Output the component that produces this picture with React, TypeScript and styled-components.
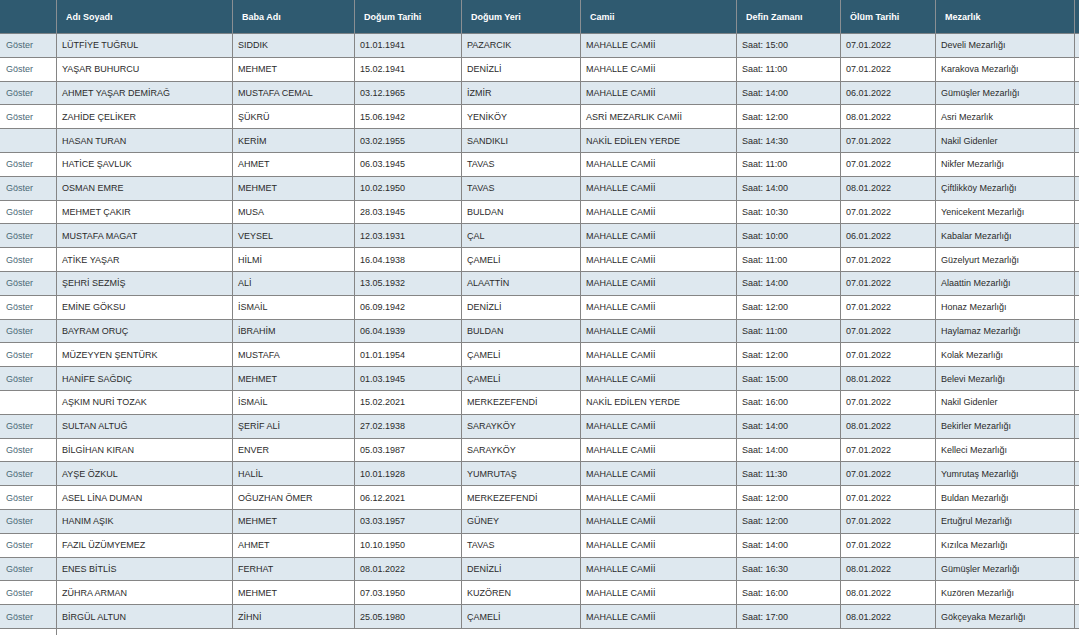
import React from "react";
import styled, { createGlobalStyle } from "styled-components";

const GlobalStyle = createGlobalStyle`
  html, body { margin: 0; padding: 0; background: #ffffff; overflow: hidden; }
  body { font-family: "Liberation Sans", Arial, sans-serif; }
`;

const Frame = styled.div`
  width: 100vw;
  height: 100vh;
  overflow: hidden;
`;

const Table = styled.table`
  border-collapse: separate;
  border-spacing: 0;
  table-layout: fixed;
  width: 1135px;
  font-family: "Liberation Sans", Arial, sans-serif;
  font-size: 9px;
  color: #2b2b2b;
`;

const HeadCell = styled.th`
  box-sizing: border-box;
  height: 34px;
  padding: 0 0 0 9px;
  background: #2f5a70;
  color: #ffffff;
  font-weight: bold;
  font-size: 9px;
  text-align: left;
  vertical-align: middle;
  border-right: 1px solid #8a8f93;
  border-bottom: 1px solid #7d8387;
  white-space: nowrap;
  overflow: hidden;
`;

const Row = styled.tr<{ $striped: boolean }>`
  height: 23.8px;
  background: ${(p) => (p.$striped ? "#dee8ef" : "#ffffff")};
`;

const Cell = styled.td`
  box-sizing: border-box;
  padding: 0 0 0 5px;
  vertical-align: middle;
  border-right: 1px solid #858585;
  border-bottom: 1px solid #858585;
  white-space: nowrap;
  overflow: hidden;
`;

const ShowCell = styled(Cell)`
  padding-left: 6px;
  color: #4a6876;
`;

const FootRow = styled.tr`
  height: 20px;
  background: #ffffff;
`;

const FootCell = styled.td<{ $divider?: boolean }>`
  border-right: ${(p) => (p.$divider ? "1px solid #858585" : "none")};
`;

const widths = [57, 176, 122, 107, 119, 156, 104, 95, 139, 60];
const headers = ["", "Adı Soyadı", "Baba Adı", "Doğum Tarihi", "Doğum Yeri", "Camii", "Defin Zamanı", "Ölüm Tarihi", "Mezarlık", ""];

type R = [boolean, string, string, string, string, string, string, string, string];

const rows: R[] = [
  [true, "LÜTFİYE TUĞRUL", "SIDDIK", "01.01.1941", "PAZARCIK", "MAHALLE CAMİİ", "Saat: 15:00", "07.01.2022", "Develi Mezarlığı"],
  [true, "YAŞAR BUHURCU", "MEHMET", "15.02.1941", "DENİZLİ", "MAHALLE CAMİİ", "Saat: 11:00", "07.01.2022", "Karakova Mezarlığı"],
  [true, "AHMET YAŞAR DEMİRAĞ", "MUSTAFA CEMAL", "03.12.1965", "İZMİR", "MAHALLE CAMİİ", "Saat: 14:00", "06.01.2022", "Gümüşler Mezarlığı"],
  [true, "ZAHİDE ÇELİKER", "ŞÜKRÜ", "15.06.1942", "YENİKÖY", "ASRİ MEZARLIK CAMİİ", "Saat: 12:00", "08.01.2022", "Asri Mezarlık"],
  [false, "HASAN TURAN", "KERİM", "03.02.1955", "SANDIKLI", "NAKİL EDİLEN YERDE", "Saat: 14:30", "07.01.2022", "Nakil Gidenler"],
  [true, "HATİCE ŞAVLUK", "AHMET", "06.03.1945", "TAVAS", "MAHALLE CAMİİ", "Saat: 11:00", "07.01.2022", "Nikfer Mezarlığı"],
  [true, "OSMAN EMRE", "MEHMET", "10.02.1950", "TAVAS", "MAHALLE CAMİİ", "Saat: 14:00", "08.01.2022", "Çiftlikköy Mezarlığı"],
  [true, "MEHMET ÇAKIR", "MUSA", "28.03.1945", "BULDAN", "MAHALLE CAMİİ", "Saat: 10:30", "07.01.2022", "Yenicekent Mezarlığı"],
  [true, "MUSTAFA MAGAT", "VEYSEL", "12.03.1931", "ÇAL", "MAHALLE CAMİİ", "Saat: 10:00", "06.01.2022", "Kabalar Mezarlığı"],
  [true, "ATİKE YAŞAR", "HİLMİ", "16.04.1938", "ÇAMELİ", "MAHALLE CAMİİ", "Saat: 11:00", "07.01.2022", "Güzelyurt Mezarlığı"],
  [true, "ŞEHRİ SEZMİŞ", "ALİ", "13.05.1932", "ALAATTİN", "MAHALLE CAMİİ", "Saat: 14:00", "07.01.2022", "Alaattin Mezarlığı"],
  [true, "EMİNE GÖKSU", "İSMAİL", "06.09.1942", "DENİZLİ", "MAHALLE CAMİİ", "Saat: 12:00", "07.01.2022", "Honaz Mezarlığı"],
  [true, "BAYRAM ORUÇ", "İBRAHİM", "06.04.1939", "BULDAN", "MAHALLE CAMİİ", "Saat: 11:00", "07.01.2022", "Haylamaz Mezarlığı"],
  [true, "MÜZEYYEN ŞENTÜRK", "MUSTAFA", "01.01.1954", "ÇAMELİ", "MAHALLE CAMİİ", "Saat: 12:00", "07.01.2022", "Kolak Mezarlığı"],
  [true, "HANİFE SAĞDIÇ", "MEHMET", "01.03.1945", "ÇAMELİ", "MAHALLE CAMİİ", "Saat: 15:00", "08.01.2022", "Belevi Mezarlığı"],
  [false, "AŞKIM NURİ TOZAK", "İSMAİL", "15.02.2021", "MERKEZEFENDİ", "NAKİL EDİLEN YERDE", "Saat: 16:00", "07.01.2022", "Nakil Gidenler"],
  [true, "SULTAN ALTUĞ", "ŞERİF ALİ", "27.02.1938", "SARAYKÖY", "MAHALLE CAMİİ", "Saat: 14:00", "08.01.2022", "Bekirler Mezarlığı"],
  [true, "BİLGİHAN KIRAN", "ENVER", "05.03.1987", "SARAYKÖY", "MAHALLE CAMİİ", "Saat: 14:00", "07.01.2022", "Kelleci Mezarlığı"],
  [true, "AYŞE ÖZKUL", "HALİL", "10.01.1928", "YUMRUTAŞ", "MAHALLE CAMİİ", "Saat: 11:30", "07.01.2022", "Yumrutaş Mezarlığı"],
  [true, "ASEL LİNA DUMAN", "OĞUZHAN ÖMER", "06.12.2021", "MERKEZEFENDİ", "MAHALLE CAMİİ", "Saat: 12:00", "07.01.2022", "Buldan Mezarlığı"],
  [true, "HANIM AŞIK", "MEHMET", "03.03.1957", "GÜNEY", "MAHALLE CAMİİ", "Saat: 12:00", "07.01.2022", "Ertuğrul Mezarlığı"],
  [true, "FAZIL ÜZÜMYEMEZ", "AHMET", "10.10.1950", "TAVAS", "MAHALLE CAMİİ", "Saat: 14:00", "07.01.2022", "Kızılca Mezarlığı"],
  [true, "ENES BİTLİS", "FERHAT", "08.01.2022", "DENİZLİ", "MAHALLE CAMİİ", "Saat: 16:30", "08.01.2022", "Gümüşler Mezarlığı"],
  [true, "ZÜHRA ARMAN", "MEHMET", "07.03.1950", "KUZÖREN", "MAHALLE CAMİİ", "Saat: 16:00", "08.01.2022", "Kuzören Mezarlığı"],
  [true, "BİRGÜL ALTUN", "ZİHNİ", "25.05.1980", "ÇAMELİ", "MAHALLE CAMİİ", "Saat: 17:00", "08.01.2022", "Gökçeyaka Mezarlığı"],
];

export default function App() {
  return (
    <Frame>
      <GlobalStyle />
      <Table>
        <colgroup>
          {widths.map((w, i) => (
            <col key={i} style={{ width: w }} />
          ))}
        </colgroup>
        <thead>
          <tr>
            {headers.map((h, i) => (
              <HeadCell key={i}>{h}</HeadCell>
            ))}
          </tr>
        </thead>
        <tbody>
          {rows.map((r, i) => (
            <Row key={i} $striped={i % 2 === 0}>
              <ShowCell>{r[0] ? "Göster" : ""}</ShowCell>
              {r.slice(1).map((v, j) => (
                <Cell key={j}>{v as string}</Cell>
              ))}
              <Cell />
            </Row>
          ))}
          <FootRow>
            <FootCell $divider />
            <FootCell colSpan={9} />
          </FootRow>
        </tbody>
      </Table>
    </Frame>
  );
}
